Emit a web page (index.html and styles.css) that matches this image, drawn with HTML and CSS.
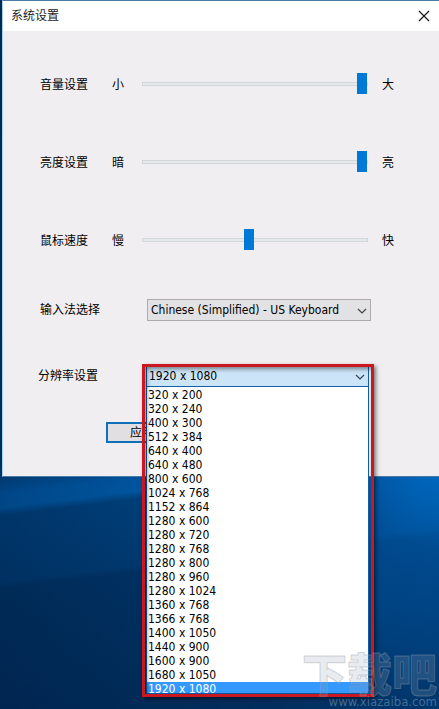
FILE: index.html
```
<!DOCTYPE html>
<html lang="zh-CN">
    <head>
        <meta charset="utf-8">
        <meta name="viewport" content="width=device-width, initial-scale=1">
        <title>系统设置</title>
        <link rel="stylesheet" href="styles.css">
    </head>
    <body>
        <div class="window">
            <div class="titlebar">
                <h1>系统设置</h1>
                <button class="close" type="button" aria-label="关闭">
                    <svg width="12" height="12" viewBox="0 0 12 12"><path d="M1 1L11 11M11 1L1 11" stroke="#111" stroke-width="1.1" fill="none"/></svg>
                </button>
            </div>
            <form class="settings">
                <div class="row slider-row">
                    <label for="volume">音量设置</label>
                    <span>小</span>
                    <input type="range" id="volume" min="0" max="100" value="100">
                    <span class="high">大</span>
                </div>
                <div class="row slider-row">
                    <label for="brightness">亮度设置</label>
                    <span>暗</span>
                    <input type="range" id="brightness" min="0" max="100" value="100">
                    <span class="high">亮</span>
                </div>
                <div class="row slider-row">
                    <label for="mouse">鼠标速度</label>
                    <span>慢</span>
                    <input type="range" id="mouse" min="0" max="100" value="47">
                    <span class="high">快</span>
                </div>
                <div class="row input-row">
                    <label for="ime">输入法选择</label>
                    <div class="combo">
                        <select id="ime">
                            <option>Chinese (Simplified) - US Keyboard</option>
                        </select>
                        <svg class="arrow" width="10" height="6" viewBox="0 0 10 6"><path d="M1 1L5 5L9 1" stroke="#444" stroke-width="1.2" fill="none"/></svg>
                    </div>
                </div>
                <div class="row resolution-row">
                    <label for="resolution">分辨率设置</label>
                    <div class="combo open">
                        <select id="resolution">
                            <option>1920 x 1080</option>
                        </select>
                        <svg class="arrow" width="10" height="6" viewBox="0 0 10 6"><path d="M1 1L5 5L9 1" stroke="#345" stroke-width="1.2" fill="none"/></svg>
                        <ul class="list" role="listbox" aria-label="分辨率设置">
                            <li role="option">320 x 200</li>
                            <li role="option">320 x 240</li>
                            <li role="option">400 x 300</li>
                            <li role="option">512 x 384</li>
                            <li role="option">640 x 400</li>
                            <li role="option">640 x 480</li>
                            <li role="option">800 x 600</li>
                            <li role="option">1024 x 768</li>
                            <li role="option">1152 x 864</li>
                            <li role="option">1280 x 600</li>
                            <li role="option">1280 x 720</li>
                            <li role="option">1280 x 768</li>
                            <li role="option">1280 x 800</li>
                            <li role="option">1280 x 960</li>
                            <li role="option">1280 x 1024</li>
                            <li role="option">1360 x 768</li>
                            <li role="option">1366 x 768</li>
                            <li role="option">1400 x 1050</li>
                            <li role="option">1440 x 900</li>
                            <li role="option">1600 x 900</li>
                            <li role="option">1680 x 1050</li>
                            <li role="option" class="selected" aria-selected="true">1920 x 1080</li>
                        </ul>
                        <div class="frame"></div>
                    </div>
                </div>
                <button class="apply" type="button">应用</button>
            </form>
        </div>
        <div class="watermark">
            <div class="logo">下载吧</div>
            <div class="site">www.xiazaiba.com</div>
        </div>
    </body>
</html>
```
FILE: styles.css
```
* {
    box-sizing: border-box;
}
body {
    position: relative;
    margin: 0;
    padding-left: 2px;
    min-height: 100vh;
    overflow: hidden;
    font-family: "DejaVu Sans Condensed", "Noto Sans CJK SC", sans-serif;
    font-size: 12px;
    line-height: 14px;
    color: #000;
    background:
        radial-gradient(circle at 100% 470px, rgba(0, 112, 205, 0.8) 0, rgba(0, 100, 190, 0.4) 80px, rgba(0, 100, 190, 0.3) 150px, transparent 290px),
        linear-gradient(173deg, transparent 0, transparent 578px, rgba(0, 20, 50, 0.2) 584px, rgba(0, 20, 50, 0.15) 100%),
        linear-gradient(90deg, rgba(0, 18, 48, 0.4) 0, rgba(0, 18, 48, 0.1) 60%, transparent 100%),
        linear-gradient(173deg, #00386e 0, #004078 460px, #0068c0 490px, #006ac0 504px, #004c8e 512px, #00407a 620px, #003468 100%);
}
.window {
    border: 1px solid #4a7ba6;
    border-left-color: #a5d3ea;
    border-right: 0;
    background-color: #f0eef1;
}
.titlebar {
    display: flex;
    align-items: center;
    justify-content: space-between;
    height: 30px;
    padding: 0 9px 0 8px;
    background-color: #fff;
}
.titlebar h1 {
    margin: 0;
    font-size: 12px;
    font-weight: normal;
    color: #222;
}
.close {
    display: flex;
    padding: 0;
    border: 0;
    background: none;
}
.settings {
    padding: 14px 0 33px 37px;
}
.row {
    display: grid;
    align-items: center;
}
.slider-row {
    grid-template-columns: 72px 30px 1fr 71px;
    height: 78px;
}
.slider-row label,
.slider-row span {
    padding-top: 2px;
}
.slider-row .high {
    padding-left: 14px;
}
.input-row {
    grid-template-columns: 107px 1fr;
    height: 62px;
    padding-right: 68px;
}
.resolution-row {
    grid-template-columns: 108px 1fr;
    height: 70px;
    margin-left: -2px;
    padding-right: 70px;
}

input[type=range] {
    appearance: none;
    -webkit-appearance: none;
    width: 100%;
    height: 21px;
    margin: 0;
    background: none;
}
input[type=range]::-webkit-slider-runnable-track {
    height: 4px;
    border: 1px solid #d3d6d9;
    background-color: #e7eaea;
}
input[type=range]::-webkit-slider-thumb {
    -webkit-appearance: none;
    width: 10px;
    height: 21px;
    margin-top: -10px;
    border-radius: 0;
    background-color: #0078d7;
}

.combo {
    position: relative;
}
.combo select {
    display: block;
    appearance: none;
    -webkit-appearance: none;
    width: 100%;
    height: 22px;
    padding: 0 20px 0 3px;
    border: 1px solid #acacac;
    border-radius: 0;
    background-color: #e2e1e3;
    font: inherit;
    color: #000;
}
.combo.open select {
    padding-left: 2px;
    border-color: #0f5fa8;
    background-color: #cce4f7;
}
.arrow {
    position: absolute;
    top: 9px;
    right: 4px;
    pointer-events: none;
}
.list {
    position: absolute;
    top: 21px;
    left: 0;
    right: 0;
    height: 308px;
    margin: 0;
    padding: 1px 0 0;
    border: 1px solid #0f5fa8;
    overflow: hidden;
    list-style: none;
    background-color: #fff;
}
.list li {
    height: 14px;
    padding-left: 1px;
}
.list .selected {
    background-color: #3399ff;
    color: #fff;
}
/* red marker around the open list */
.frame {
    position: absolute;
    top: -1px;
    left: -4px;
    right: -5px;
    height: 333px;
    border: 3px solid #cb1820;
    box-shadow: 2px 2px 4px rgba(0, 0, 0, 0.5), inset 2px 2px 4px rgba(0, 0, 0, 0.45);
    pointer-events: none;
}
.apply {
    display: block;
    width: 72px;
    height: 21px;
    margin: 11px 0 0 66px;
    padding: 0;
    border: 2px solid #0f6fb8;
    background-color: #e1dfe2;
    font: inherit;
    color: #000;
}

.watermark {
    position: absolute;
    right: 2px;
    bottom: 0;
    text-align: right;
    pointer-events: none;
}
.logo {
    font-family: "Noto Sans CJK SC", sans-serif;
    font-size: 45px;
    font-weight: 900;
    line-height: 44px;
    color: rgba(150, 165, 185, 0.22);
    -webkit-text-stroke: 1px rgba(150, 155, 165, 0.4);
}
.site {
    font-family: "DejaVu Sans Condensed", sans-serif;
    font-size: 13px;
    line-height: 14px;
    color: rgba(140, 165, 195, 0.5);
}
```
